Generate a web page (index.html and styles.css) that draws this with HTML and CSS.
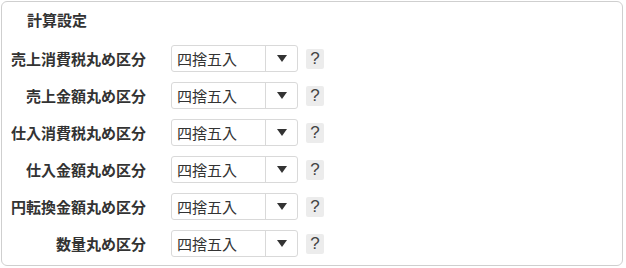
FILE: index.html
```html
<!DOCTYPE html>
<html lang="ja">
<head>
<meta charset="utf-8">
<link rel="stylesheet" href="styles.css">
</head>
<body>
<div class="panel">
  <div class="title">計算設定</div>
  <div class="rows">
    <div class="label">売上消費税丸め区分</div>
    <div class="field"><div class="select"><span class="value">四捨五入</span><span class="btn"><span class="arrow"></span></span></div><span class="help">?</span></div>
    <div class="label">売上金額丸め区分</div>
    <div class="field"><div class="select"><span class="value">四捨五入</span><span class="btn"><span class="arrow"></span></span></div><span class="help">?</span></div>
    <div class="label">仕入消費税丸め区分</div>
    <div class="field"><div class="select"><span class="value">四捨五入</span><span class="btn"><span class="arrow"></span></span></div><span class="help">?</span></div>
    <div class="label">仕入金額丸め区分</div>
    <div class="field"><div class="select"><span class="value">四捨五入</span><span class="btn"><span class="arrow"></span></span></div><span class="help">?</span></div>
    <div class="label">円転換金額丸め区分</div>
    <div class="field"><div class="select"><span class="value">四捨五入</span><span class="btn"><span class="arrow"></span></span></div><span class="help">?</span></div>
    <div class="label">数量丸め区分</div>
    <div class="field"><div class="select"><span class="value">四捨五入</span><span class="btn"><span class="arrow"></span></span></div><span class="help">?</span></div>
  </div>
</div>
</body>
</html>
```
FILE: styles.css
```css
html, body {
  margin: 0;
  padding: 0;
  background: #fff;
}
body {
  font-family: "Noto Sans CJK JP", "Noto Sans", sans-serif;
  color: #333;
  font-size: 15px;
}
.panel {
  box-sizing: border-box;
  margin: 1px 0 0 1px;
  width: 622px;
  height: 265px;
  border: 1px solid #cfcfcf;
  border-radius: 6px;
  padding-top: 8px;
}
.title {
  font-weight: bold;
  line-height: 20px;
  height: 20px;
  padding-left: 25px;
  color: #333;
}
.rows {
  margin-top: 10px;
  display: grid;
  grid-template-columns: 144px 1fr;
  grid-auto-rows: 37px;
  column-gap: 25px;
}
.label {
  text-align: right;
  font-weight: bold;
  line-height: 37px;
  white-space: nowrap;
  color: #333;
}
.field {
  display: flex;
  align-items: center;
  gap: 8px;
}
.select {
  box-sizing: border-box;
  display: flex;
  width: 127px;
  height: 27px;
  border: 1px solid #d9d9d9;
  border-radius: 3px;
  background: #fff;
}
.value {
  flex: 1;
  line-height: 25px;
  padding-left: 5px;
  color: #333;
}
.btn {
  width: 31px;
  border-left: 1px solid #d9d9d9;
  display: flex;
  align-items: center;
  justify-content: center;
}
.arrow {
  width: 0;
  height: 0;
  border-left: 5px solid transparent;
  border-right: 5px solid transparent;
  border-top: 7px solid #333;
}
.help {
  width: 18px;
  height: 20px;
  background: #ececec;
  border-radius: 2px;
  color: #444;
  font-family: "Liberation Sans", sans-serif;
  font-size: 17px;
  line-height: 20px;
  text-align: center;
}
```
